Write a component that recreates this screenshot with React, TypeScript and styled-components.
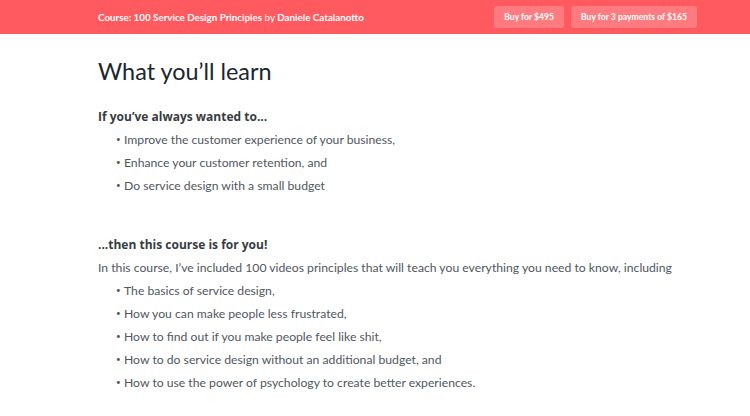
import React from "react";
import styled, { createGlobalStyle } from "styled-components";

const Global = createGlobalStyle`
  html, body { margin: 0; padding: 0; background: #fff; }
  body { font-family: "Lato", "Open Sans", sans-serif; -webkit-font-smoothing: antialiased; }
`;

const TopBar = styled.header`
  height: 34px;
  background: #ff5a5f;
  display: flex;
  align-items: center;
  justify-content: space-between;
  padding: 0 53px 0 98px;
  box-sizing: border-box;
`;

const CourseTitle = styled.div`
  color: #fff;
  font-size: 9.8px;
  font-weight: 400;
  white-space: nowrap;
  b { font-weight: 700; }
`;

const Actions = styled.div`
  display: flex;
  gap: 7px;
`;

const BuyButton = styled.button`
  height: 22px;
  padding: 0 10px;
  border: none;
  border-radius: 3px;
  background: #ff7b80;
  color: #fff;
  font-family: inherit;
  font-size: 8.6px;
  font-weight: 700;
  cursor: pointer;
`;

const Main = styled.main`
  padding: 21px 0 0 98px;
`;

const Heading = styled.h1`
  margin: 0 0 18px;
  font-size: 23.4px;
  font-weight: 400;
  color: #1b2631;
  line-height: 32px;
`;

const Lead = styled.h3`
  margin: 0;
  font-family: "Open Sans", "Lato", sans-serif;
  font-size: 12px;
  font-weight: 700;
  color: #363c42;
  line-height: 23px;
`;

const Para = styled.p`
  margin: 0;
  font-size: 12.2px;
  color: #50575e;
  line-height: 23px;
  white-space: nowrap;
`;

const List = styled.ul<{ $after: number }>`
  margin: 0 0 ${(p) => p.$after}px;
  padding: 0 0 0 18px;
  list-style: none;
`;

const Item = styled.li`
  font-size: 12.2px;
  color: #50575e;
  line-height: 23px;
  display: flex;
  &::before {
    content: "•";
    width: 8px;
    flex: none;
    font-size: 8px;
    color: #50575e;
  }
`;

export default function App() {
  return (
    <>
      <Global />
      <TopBar>
        <CourseTitle>
          <b>Course: 100 Service Design Principles</b> by <b>Daniele Catalanotto</b>
        </CourseTitle>
        <Actions>
          <BuyButton>Buy for $495</BuyButton>
          <BuyButton>Buy for 3 payments of $165</BuyButton>
        </Actions>
      </TopBar>
      <Main>
        <Heading>What you’ll learn</Heading>
        <Lead>If you’ve always wanted to...</Lead>
        <List $after={36}>
          <Item>Improve the customer experience of your business,</Item>
          <Item>Enhance your customer retention, and</Item>
          <Item>Do service design with a small budget</Item>
        </List>
        <Lead>...then this course is for you!</Lead>
        <Para>
          In this course, I’ve included 100 videos principles that will teach you everything you need to know, including
        </Para>
        <List $after={0}>
          <Item>The basics of service design,</Item>
          <Item>How you can make people less frustrated,</Item>
          <Item>How to find out if you make people feel like shit,</Item>
          <Item>How to do service design without an additional budget, and</Item>
          <Item>How to use the power of psychology to create better experiences.</Item>
        </List>
      </Main>
    </>
  );
}
